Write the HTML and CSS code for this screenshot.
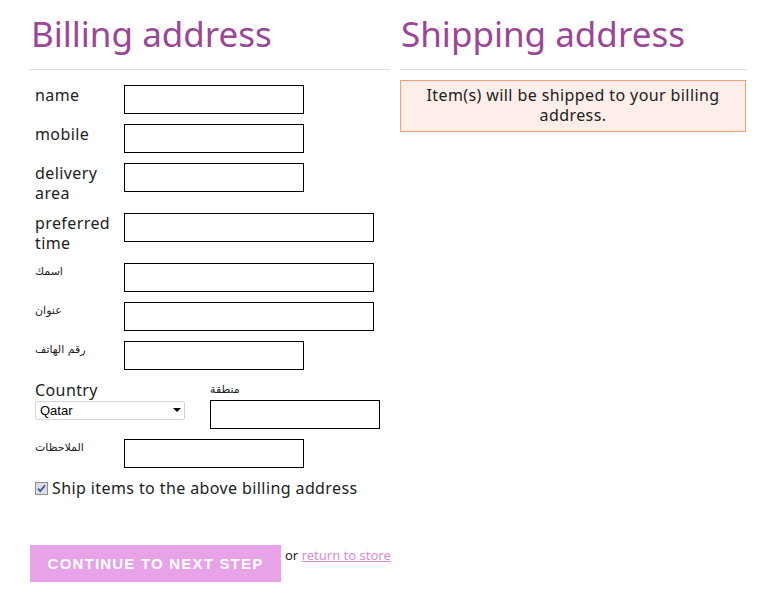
FILE: index.html
```html
<!DOCTYPE html>
<html>
  <head>
    <title>Checkout</title>
    <link rel="stylesheet" href="styles.css">
  </head>
  <body>
    <div class="checkout">
      <div class="billing">
        <h1>Billing address</h1>
        <form class="fields">
          <div class="row">
            <label for="name">name</label>
            <input type="text" id="name" class="short">
          </div>
          <div class="row">
            <label for="mobile">mobile</label>
            <input type="text" id="mobile" class="short">
          </div>
          <div class="row">
            <label for="area">delivery area</label>
            <input type="text" id="area" class="short">
          </div>
          <div class="row">
            <label for="time">preferred time</label>
            <input type="text" id="time" class="long">
          </div>
          <div class="row">
            <label for="ar_name" class="ar">اسمك</label>
            <input type="text" id="ar_name" class="long">
          </div>
          <div class="row">
            <label for="ar_addr" class="ar">عنوان</label>
            <input type="text" id="ar_addr" class="long">
          </div>
          <div class="row">
            <label for="ar_phone" class="ar">رقم الهاتف</label>
            <input type="text" id="ar_phone" class="short">
          </div>
          <div class="row">
            <div class="country">
              <label for="country" class="top">Country</label>
              <div class="select-wrap">
                <select id="country">
                  <option value="QA">Qatar</option>
                </select>
              </div>
            </div>
            <div class="region">
              <label for="region" class="top ar">منطقة</label>
              <input type="text" id="region" class="mid">
            </div>
          </div>
          <div class="row">
            <label for="notes" class="ar">الملاحظات</label>
            <input type="text" id="notes" class="short">
          </div>
          <label class="check">
            <input type="checkbox" id="same" checked>
            <span class="box">
              <svg width="11" height="11" viewBox="0 0 11 11"><path d="M2 5.5 L4.3 8 L9 2.2" fill="none" stroke="#3a56a8" stroke-width="1.8"/></svg>
            </span>
            Ship items to the above billing address
          </label>
          <div class="actions">
            <button type="button">Continue to next step</button>
            <span class="or">or <a href="#">return to store</a></span>
          </div>
        </form>
      </div>
      <div class="shipping">
        <h1>Shipping address</h1>
        <div class="notice">Item(s) will be shipped to your billing address.</div>
      </div>
    </div>
  </body>
</html>
```

FILE: styles.css
```css
body {
  font-family: "Noto Sans", sans-serif;
  letter-spacing: 0.4px;
  margin: 0;
  padding: 0;
  background-color: #fff;
  color: #222;
}

.checkout {
  display: flex;
  gap: 10px;
  padding: 12px 0 0 30px;
}

.billing {
  width: 360px;
}

.shipping {
  width: 346px;
}

h1 {
  font-size: 35px;
  font-weight: normal;
  letter-spacing: 0;
  color: #9b4697;
  margin: 0;
  padding: 0 0 13px 1px;
  line-height: 44px;
  border-bottom: 1px solid #ddd;
}

.fields {
  padding: 15px 0 0 5px;
}

.row {
  display: flex;
  align-items: flex-start;
  margin-bottom: 10px;
}

.row label {
  width: 89px;
  font-size: 16px;
  line-height: 20px;
}

.row label.ar {
  font-family: "DejaVu Sans", sans-serif;
  font-size: 11px;
  letter-spacing: 0;
  line-height: 16px;
  padding-top: 1px;
}

.row label.top {
  display: block;
  width: auto;
  height: 20px;
  line-height: 20px;
  padding-top: 0;
}

input[type="text"] {
  height: 29px;
  box-sizing: border-box;
  border: 1px solid #000;
  margin: 0;
  padding: 2px 4px;
}

.short {
  width: 180px;
}

.long {
  width: 250px;
}

.mid {
  width: 170px;
}

.country {
  width: 175px;
}

.select-wrap {
  position: relative;
  width: 150px;
  margin-top: 1px;
}

.select-wrap::after {
  content: "";
  position: absolute;
  right: 4px;
  top: 7px;
  border-left: 4px solid transparent;
  border-right: 4px solid transparent;
  border-top: 4px solid #000;
  pointer-events: none;
}

select {
  display: block;
  width: 150px;
  height: 19px;
  -webkit-appearance: none;
  appearance: none;
  font-family: "Liberation Sans", Arial, sans-serif;
  font-size: 13px;
  letter-spacing: 0;
  color: #000;
  border: 1px solid #d5d5d5;
  border-radius: 2px;
  background: #fff;
  margin: 0;
  padding: 0 4px;
}

.check {
  display: flex;
  align-items: center;
  font-size: 16px;
  line-height: 20px;
  margin-top: 10px;
}

.check input {
  display: none;
}

.box {
  width: 11px;
  height: 11px;
  border: 1px solid #8f8f8f;
  background-color: #dedede;
  margin-right: 4px;
}

.box svg {
  display: block;
}

.actions {
  display: flex;
  align-items: flex-start;
  margin: 47px 0 0 -5px;
}

button {
  flex-shrink: 0;
  width: 251px;
  height: 37px;
  background-color: #e8a2e8;
  color: #fff;
  border: none;
  font-family: "Liberation Sans", Arial, sans-serif;
  font-weight: bold;
  font-size: 15px;
  letter-spacing: 1.2px;
  text-transform: uppercase;
  cursor: pointer;
}

.or {
  font-size: 13px;
  letter-spacing: 0;
  white-space: nowrap;
  margin: 1px 0 0 4px;
}

.or a {
  color: #d98ad9;
}

.notice {
  margin-top: 10px;
  border: 1px solid #f5a06e;
  background-color: #fdeeea;
  text-align: center;
  font-size: 16px;
  line-height: 20px;
  padding: 4px 20px 6px;
}
```
